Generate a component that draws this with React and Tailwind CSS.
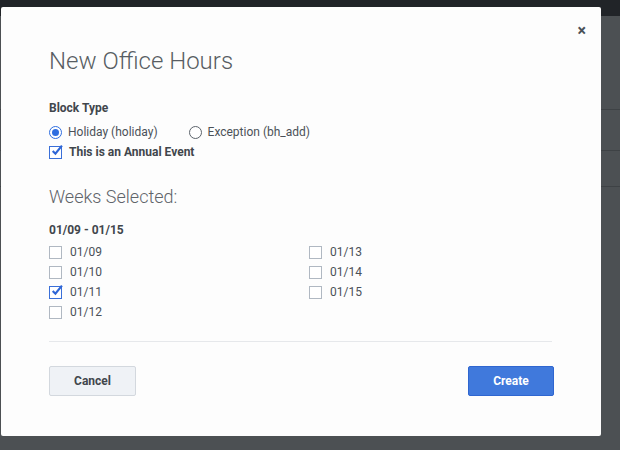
import React, { useState } from "react";

const Check = ({ checked, onClick }) => (
  <span
    onClick={onClick}
    className={`relative inline-block w-[13px] h-[13px] border ${
      checked ? "border-[#3a6fd8]" : "border-[#b0b8c2]"
    } bg-white`}
  >
    {checked && (
      <svg viewBox="0 0 12 12" className="absolute left-[0px] top-[-3px] w-[13px] h-[13px]">
        <path d="M2.5 6.5 L5 9 L11 1.5" fill="none" stroke="#2f66d6" strokeWidth="2" />
      </svg>
    )}
  </span>
);

const Radio = ({ checked }) => (
  <span
    className={`inline-flex items-center justify-center w-[13px] h-[13px] rounded-full border ${
      checked ? "border-[#2f6ee0]" : "border-[#5c636b]"
    } bg-white`}
  >
    {checked && <span className="w-[7px] h-[7px] rounded-full bg-[#2f6ee0]" />}
  </span>
);

export default function App() {
  const [days, setDays] = useState({ "01/11": true });
  const left = ["01/09", "01/10", "01/11", "01/12"];
  const right = ["01/13", "01/14", "01/15"];

  const toggle = (d) => setDays({ ...days, [d]: !days[d] });

  const Day = ({ d }) => (
    <div className="flex items-center gap-[8px] h-[20px]">
      <Check checked={!!days[d]} onClick={() => toggle(d)} />
      <span className="text-[12px] text-[#4b5158]">{d}</span>
    </div>
  );

  return (
    <div
      className="relative w-[620px] h-[450px] bg-[#4c5053] overflow-hidden"
      style={{ fontFamily: "Roboto, 'Liberation Sans', sans-serif" }}
    >
      {/* page behind overlay */}
      <div className="h-[16px] bg-[#212428]" />
      <div className="flex flex-col">
        <div className="h-[93px]" />
        <div className="h-[41px] border-t border-[#3e4245]" />
        <div className="h-[36px] border-t border-[#3e4245]" />
        <div className="border-t border-[#3e4245]" />
      </div>

      {/* Modal */}
      <div className="absolute left-[1px] top-[7px] w-[600px] h-[429px] bg-[#fdfdfd] rounded-[2px] pl-[48px] pr-[49px] pt-[38px]">
        <button className="absolute right-[15px] top-[16px] text-[#4b5158] text-[16px] font-bold leading-none">
          ×
        </button>

        <h1 className="text-[24px] font-light text-[#585d63] leading-[32px]">New Office Hours</h1>

        <div className="mt-[23px] text-[12px] font-bold text-[#41464c] leading-[16px]">Block Type</div>
        <div className="mt-[8px] flex items-center h-[16px] text-[12px] text-[#4b5158]">
          <label className="flex items-center gap-[6px]">
            <Radio checked />
            Holiday (holiday)
          </label>
          <label className="flex items-center gap-[6px] ml-[31px]">
            <Radio />
            Exception (bh_add)
          </label>
        </div>
        <div className="mt-[4px] flex items-center gap-[7px] h-[16px]">
          <Check checked />
          <span className="text-[12px] font-bold text-[#41464c]">This is an Annual Event</span>
        </div>

        <div className="mt-[25px] text-[18px] font-light text-[#5f646a] leading-[24px]">Weeks Selected:</div>
        <div className="mt-[13px] text-[12px] font-bold text-[#41464c] leading-[16px]">01/09 - 01/15</div>

        <div className="mt-[4px] grid grid-cols-2 w-[520px]">
          <div className="flex flex-col">
            {left.map((d) => (
              <Day key={d} d={d} />
            ))}
          </div>
          <div className="flex flex-col">
            {right.map((d) => (
              <Day key={d} d={d} />
            ))}
          </div>
        </div>

        <div className="mt-[19px] border-t border-[#e6e8eb]" />

        <div className="mt-[24px] -mr-[2px] flex justify-between">
          <button className="w-[87px] h-[30px] rounded-[2px] border border-[#d3d8de] bg-[#eff2f6] text-[12px] font-bold text-[#41464c]">
            Cancel
          </button>
          <button className="w-[86px] h-[30px] rounded-[2px] border border-[#2f66d0] bg-[#4079dc] text-[12px] font-bold text-white">
            Create
          </button>
        </div>
      </div>
    </div>
  );
}
